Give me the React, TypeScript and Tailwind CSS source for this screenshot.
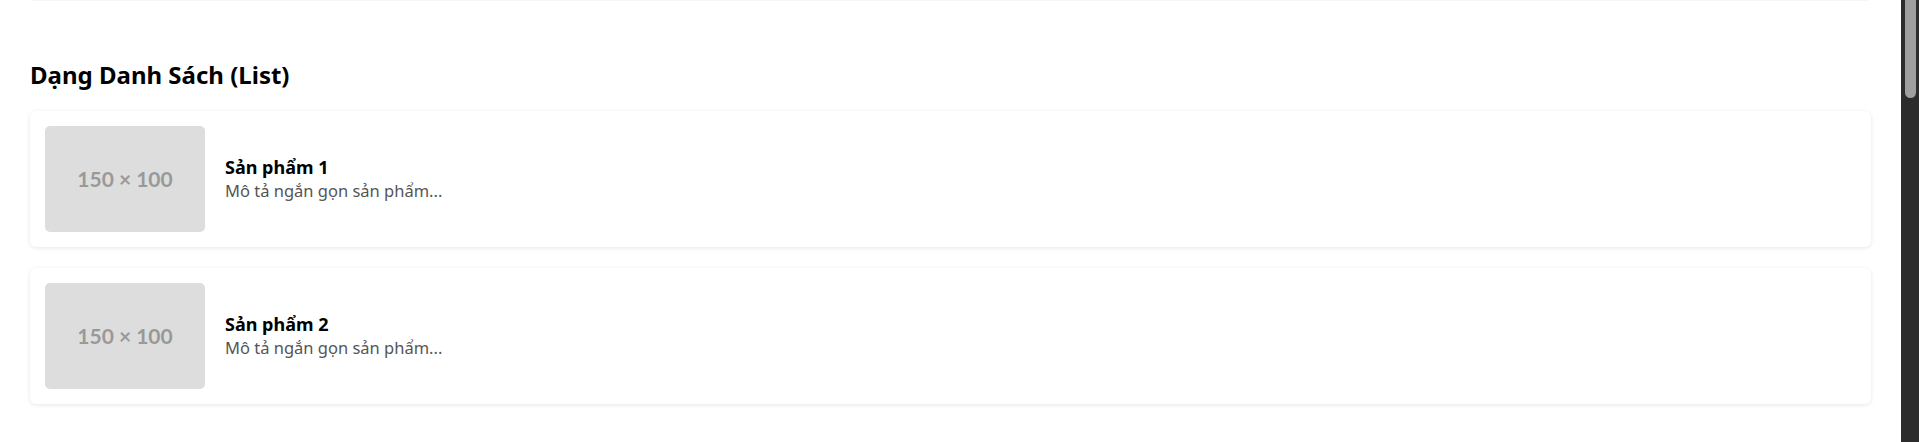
const products = [
  { id: 1, name: 'Sản phẩm 1', desc: 'Mô tả ngắn gọn sản phẩm...' },
  { id: 2, name: 'Sản phẩm 2', desc: 'Mô tả ngắn gọn sản phẩm...' },
]

const App = () => {
  return (
    <div className="flex h-[442px] w-full overflow-hidden bg-white font-['Noto_Sans',sans-serif]">
      <main className="flex-1 px-[30px]">
        {/* tail of the section above */}
        <div className="mx-[2px] h-px bg-[#f6f6f6]" />

        <h2 className="mt-[59px] text-[24px] font-bold leading-[30px] text-black">Dạng Danh Sách (List)</h2>

        <div className="mt-[21px] flex flex-col gap-[21px]">
          {products.map((p) => (
            <div
              key={p.id}
              className="flex items-center gap-5 rounded-md bg-white p-[15px] shadow-[0_1px_4px_rgba(0,0,0,0.1)]"
            >
              <div className="flex h-[106px] w-[160px] shrink-0 items-center justify-center rounded-[5px] bg-[#dddddd] font-['Lato',sans-serif] text-[21px] font-bold text-[#999999]">
                150 × 100
              </div>
              <div>
                <h3 className="text-[18px] font-bold leading-[24px] text-black">{p.name}</h3>
                <p className="text-[16.5px] leading-[24px] text-[#555555]">{p.desc}</p>
              </div>
            </div>
          ))}
        </div>
      </main>

      {/* browser scrollbar */}
      <div className="w-[18px] shrink-0 bg-[#2c2c2c] pl-[4px] pr-[3px]">
        <div className="h-[98px] rounded-b-full bg-[#9f9f9f]" />
      </div>
    </div>
  )
}

export default App
